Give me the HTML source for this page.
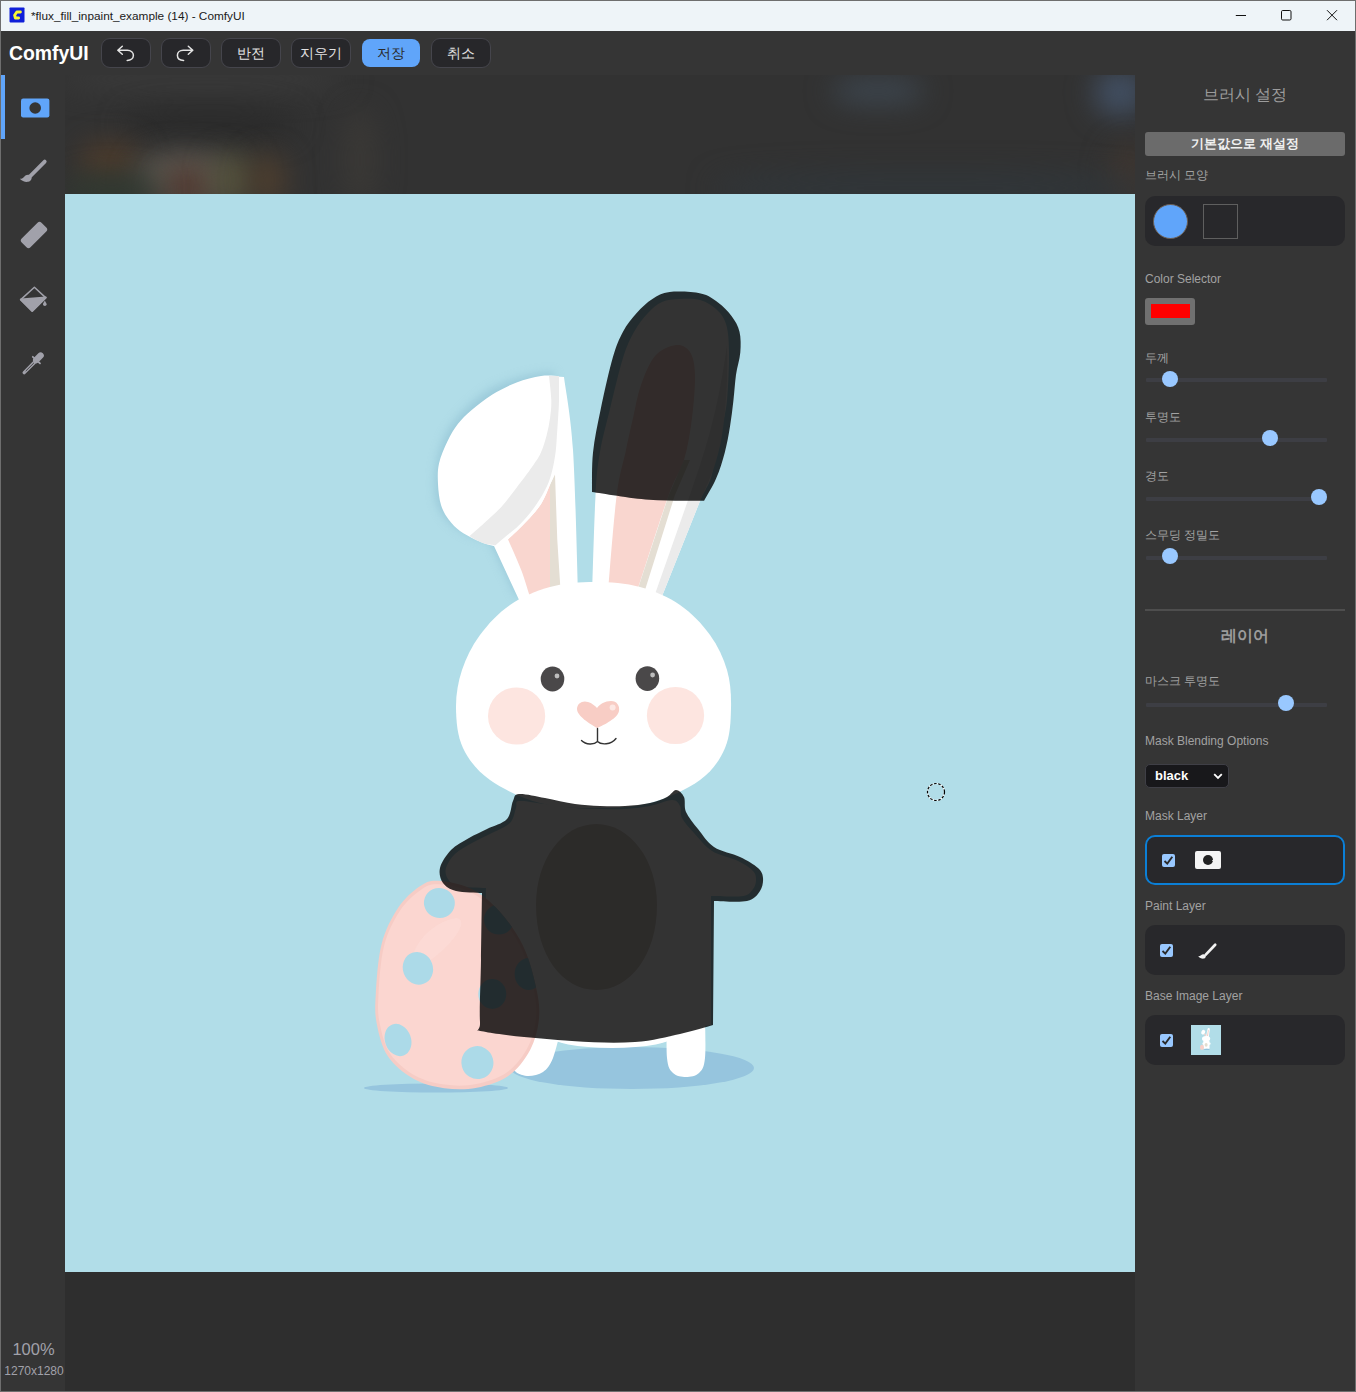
<!DOCTYPE html>
<html><head><meta charset="utf-8">
<style>
*{box-sizing:border-box;margin:0;padding:0}
html,body{width:1356px;height:1392px;overflow:hidden;background:#6e6e6e;font-family:"Liberation Sans",sans-serif}
.abs{position:absolute}
#win{position:absolute;left:1px;top:1px;width:1354px;height:1390px;background:#353535;overflow:hidden}
#title{position:absolute;left:0;top:0;width:1354px;height:30px;background:#eef4f8}
#title .t{position:absolute;left:30px;top:7.5px;font-size:11.8px;color:#1a1a1a;white-space:nowrap}
#header{position:absolute;left:0;top:30px;width:1354px;height:44px;background:#353535}
.btn{position:absolute;top:7px;height:30px;border:1px solid #45454c;background:#27272a;border-radius:9px;color:#e2e2e2;font-size:14px;text-align:center;line-height:28px}
#left{position:absolute;left:0;top:74px;width:64px;height:1316px;background:#353535}
#canvasbg{position:absolute;left:64px;top:74px;width:1070px;height:1316px;background:#2e2e2e;overflow:hidden}
#side{position:absolute;left:1134px;top:74px;width:220px;height:1316px;background:#353535}
.lbl{position:absolute;left:10px;font-size:12px;color:#a2a2a2;white-space:nowrap}
.track{position:absolute;left:11px;width:181px;height:4px;background:#3d3e44;border-radius:1px}
.thumb{position:absolute;width:16px;height:16px;border-radius:50%;background:#99c8ff}
.lay{position:absolute;left:10px;width:200px;height:50px;background:#28282b;border-radius:10px}
.chk{position:absolute;width:13px;height:13px;background:#99c8ff;border-radius:2px}
</style></head><body>
<div id="win">
  <div id="title">
    <svg class="abs" style="left:0;top:0" width="1354" height="30" viewBox="1 1 1354 30">
      <rect x="9.5" y="7.4" width="15" height="15" rx="0.8" fill="#0f1fd8"/>
      <path d="M20.4 12 L16.8 12 L14.6 15.2 L15.4 18 L18.6 18" fill="none" stroke="#f8f832" stroke-width="2.9" stroke-linejoin="round" stroke-linecap="round"/>
      <line x1="1235.8" y1="15.5" x2="1246" y2="15.5" stroke="#111" stroke-width="1"/>
      <rect x="1281.5" y="10.5" width="9.5" height="9.5" rx="1.2" fill="none" stroke="#111" stroke-width="1"/>
      <path d="M1327 10.2 L1337 20.2 M1337 10.2 L1327 20.2" stroke="#111" stroke-width="1"/>
    </svg>
    <div class="t">*flux_fill_inpaint_example (14) - ComfyUI</div>
  </div>
  <div id="header">
    <div class="abs" style="left:8px;top:10.5px;font-size:19.4px;font-weight:bold;color:#fff">ComfyUI</div>
    <div class="btn" style="left:100px;width:50px"></div>
    <div class="btn" style="left:160px;width:50px"></div>
    <svg class="abs" style="left:0;top:0" width="300" height="44" viewBox="1 31 300 44">
      <path d="M122.3 46.2 L117.8 50.2 L122.3 54.2 M118 50.2 L127.4 50.2 C131 50.2 133.4 52.6 133.4 55.3 C133.4 58.2 131 60.4 127.2 60.4" fill="none" stroke="#e4e4e4" stroke-width="1.5" stroke-linecap="round" stroke-linejoin="round"/>
      <path d="M188.3 46.2 L192.8 50.2 L188.3 54.2 M192.6 50.2 L183.2 50.2 C179.6 50.2 177.4 52.6 177.4 55.3 C177.4 58.2 179.6 60.4 183.6 60.4" fill="none" stroke="#e4e4e4" stroke-width="1.5" stroke-linecap="round" stroke-linejoin="round"/>
    </svg>
    <div class="btn" style="left:220px;width:60px">반전</div>
    <div class="btn" style="left:290px;width:60px">지우기</div>
    <div class="btn" style="left:360px;width:60px;background:#60a5fa;border-color:transparent;background-clip:padding-box;color:#2a2a2a">저장</div>
    <div class="btn" style="left:430px;width:60px">취소</div>
  </div>
  <div id="left">
    <div class="abs" style="left:0;top:1264.8px;width:65px;text-align:center;font-size:16.5px;color:#a1a1aa;white-space:nowrap">100%</div>
    <div class="abs" style="left:0;top:1288.8px;width:66px;text-align:center;font-size:12px;color:#a1a1aa;white-space:nowrap">1270x1280</div>
    <div class="abs" style="left:0;top:0;width:4px;height:64px;background:#60a5fa"></div>
    <svg class="abs" style="left:0;top:0" width="64" height="320" viewBox="0 0 64 320">
      <rect x="20" y="23.6" width="28.4" height="18.8" rx="2.2" fill="#60a5fa"/>
      <circle cx="34.2" cy="33" r="5.8" fill="#353535"/>
      <line x1="43.7" y1="86.6" x2="29.5" y2="100.8" stroke="#a1a1aa" stroke-width="3.8" stroke-linecap="round"/>
      <path d="M30 101 C28 98.8 24.6 99.6 23.2 101.8 C22.2 103.2 20.6 104 18.8 103.8 C20.8 106.2 24.6 107.4 27.2 106.8 C30 106.2 31.6 103.2 30 101Z" fill="#a1a1aa"/>
      <rect x="19" y="153.8" width="28" height="12.4" rx="2.8" fill="#a1a1aa" transform="rotate(-45 33 160)"/>
      <path d="M33.4 212.2 L44.6 222.6 L31.2 235.8 L19.8 224.6 Z" fill="none" stroke="#a1a1aa" stroke-width="1.5" stroke-linejoin="round"/>
      <path d="M19.8 224.6 L44.8 222.6 L31.2 236 Z" fill="#a1a1aa" stroke="#a1a1aa" stroke-width="2" stroke-linejoin="round"/>
      <path d="M43.8 225.8 C43.8 225.8 42 228.4 42 229.2 A1.8 1.8 0 0 0 45.6 229.2 C45.6 228.4 43.8 225.8 43.8 225.8Z" fill="#a1a1aa"/>
      <line x1="35.2" y1="285" x2="39.6" y2="280.6" stroke="#a1a1aa" stroke-width="6.4" stroke-linecap="round"/>
      <line x1="31.8" y1="281.8" x2="39" y2="288.4" stroke="#a1a1aa" stroke-width="1.8" stroke-linecap="round"/>
      <path d="M34 286.8 L23.2 297.6" stroke="#a1a1aa" stroke-width="3.4" stroke-linecap="round"/>
      <path d="M32.6 288.2 L25 295.8" stroke="#353535" stroke-width="0.9" stroke-linecap="round"/>
    </svg>
  </div>
  <div id="canvasbg">
    <div class="abs" style="left:0;top:0;width:1070px;height:119px;overflow:hidden;background:#323232">
      <div class="abs" style="left:-10px;top:-8px;width:290px;height:24px;background:#3b3b3b;filter:blur(14px);border-radius:40%"></div>
      <div class="abs" style="left:60px;top:35px;width:170px;height:30px;background:#2a2a2a;filter:blur(14px);border-radius:40%"></div>
      <div class="abs" style="left:15px;top:68px;width:60px;height:36px;background:#4e3c2c;filter:blur(14px);border-radius:40%"></div>
      <div class="abs" style="left:72px;top:78px;width:95px;height:50px;background:#5d5a52;filter:blur(14px);border-radius:40%"></div>
      <div class="abs" style="left:98px;top:92px;width:50px;height:40px;background:#523a32;filter:blur(14px);border-radius:40%"></div>
      <div class="abs" style="left:148px;top:80px;width:40px;height:50px;background:#54523c;filter:blur(14px);border-radius:40%"></div>
      <div class="abs" style="left:185px;top:80px;width:35px;height:50px;background:#4e3e2e;filter:blur(14px);border-radius:40%"></div>
      <div class="abs" style="left:0px;top:100px;width:95px;height:30px;background:#313a31;filter:blur(14px);border-radius:40%"></div>
      <div class="abs" style="left:280px;top:35px;width:30px;height:100px;background:#3b3936;filter:blur(14px);border-radius:40%"></div>
      <div class="abs" style="left:768px;top:4px;width:90px;height:24px;background:#3e4852;filter:blur(14px);border-radius:40%"></div>
      <div class="abs" style="left:1030px;top:-5px;width:50px;height:45px;background:#425064;filter:blur(14px);border-radius:40%"></div>
      <div class="abs" style="left:1045px;top:70px;width:40px;height:60px;background:#3f3630;filter:blur(14px);border-radius:40%"></div>
      <div class="abs" style="left:650px;top:98px;width:430px;height:30px;background:#30363a;filter:blur(14px);border-radius:40%"></div>
    </div>
        <svg class="abs" style="left:0;top:0" width="1070" height="1316" viewBox="65 75 1070 1316">
      <defs>
        <filter id="bl" x="-50%" y="-50%" width="200%" height="200%"><feGaussianBlur stdDeviation="12"/></filter>
        <filter id="bl2" x="-50%" y="-50%" width="200%" height="200%"><feGaussianBlur stdDeviation="5"/></filter>
        <clipPath id="eggclip"><path d="M450 880 C505 880 545 940 542 1010 C540 1060 505 1088 458 1088 C410 1088 375 1055 375 1005 C375 935 405 880 450 880 Z"/></clipPath>
        <clipPath id="topclip"><rect x="65" y="75" width="1070" height="119"/></clipPath>
      </defs>
            <rect x="65" y="194" width="1070" height="1078" fill="#b1dde8"/>
      <!--BUNNY-->
      <path d="M559 376 C540 376 516 382 492 394 C472 408 458 423 450 438 C440 458 437 484 440 505 C446 525 466 540 494 545 L520 600 L540 600 Z" fill="#86b8cc" opacity="0.5" filter="url(#bl2)" transform="translate(-4,-4)"/>
      <path d="M494.0 546.0 L520.0 602.0 L578.0 592.0 C577.2 568.3 575.3 485.8 573.0 450.0 C570.7 414.2 565.5 389.2 564.0 377.0 L549.0 376.0 L494.0 546.0 Z" fill="#ffffff"/>
      <path d="M508.0 539.3 C511.1 536.3 520.9 527.5 526.4 521.6 C531.9 515.7 537.2 510.0 541.1 503.9 C545.0 497.8 548.5 487.9 550.0 484.7 L550.0 590.0 L529.4 595.0 C528.0 590.8 524.8 579.3 521.2 570.0 C517.6 560.7 510.2 544.4 508.0 539.3 Z" fill="#f9d6cf"/>
      <path d="M550 484.7 L555 474.4 L557.3 540 L560.5 590 L550 590 Z" fill="#e4ded3"/>
      <path d="M559.0 376.0 C556.0 376.0 548.1 374.9 541.0 376.0 C533.9 377.1 524.7 379.3 516.6 382.4 C508.5 385.5 499.9 389.9 492.4 394.5 C484.9 399.1 477.4 405.1 471.7 410.0 C466.0 414.9 462.0 418.6 458.0 423.8 C454.0 429.0 450.8 434.4 447.6 441.0 C444.4 447.6 440.6 456.2 439.0 463.4 C437.4 470.6 437.7 477.1 438.0 484.0 C438.3 490.9 439.2 499.0 441.0 505.0 C442.8 511.0 445.8 515.7 449.0 520.0 C452.2 524.3 455.8 527.8 460.0 531.0 C464.2 534.2 469.7 536.8 474.0 539.0 C478.3 541.2 482.7 542.8 486.0 544.0 C489.3 545.2 492.7 545.7 494.0 546.0 C496.3 544.9 502.6 543.4 508.0 539.3 C513.4 535.2 520.9 527.5 526.4 521.6 C531.9 515.7 537.2 510.0 541.1 503.9 C545.0 497.8 547.9 489.7 550.0 484.7 C552.1 479.7 552.8 479.3 554.0 474.0 C555.2 468.7 556.7 462.0 557.5 453.0 C558.3 444.0 558.8 432.8 559.0 420.0 C559.2 407.2 559.0 383.3 559.0 376.0 Z" fill="#ffffff"/>
      <path d="M549.0 376.0 L559.0 376.0 C559.0 380.0 559.1 393.1 559.0 400.0 C558.9 406.9 558.5 411.8 558.1 417.7 C557.8 423.6 557.3 429.5 556.9 435.4 C556.5 441.3 556.4 446.6 555.5 453.0 C554.6 459.4 553.2 467.4 551.4 473.7 C549.6 480.0 547.8 484.8 544.8 490.6 C541.8 496.4 538.0 502.5 533.7 508.3 C529.4 514.1 523.7 520.6 519.0 525.3 C514.3 530.0 509.6 533.1 505.7 536.4 C501.8 539.7 497.1 543.7 495.4 545.2 C493.8 545.0 489.2 544.9 486.0 544.0 C482.8 543.1 478.7 541.3 476.0 540.0 C473.3 538.7 470.7 536.7 469.6 536.0 C472.1 533.9 479.0 528.0 484.3 523.1 C489.6 518.2 496.0 512.7 501.3 506.9 C506.6 501.1 510.9 495.0 516.0 488.4 C521.1 481.8 527.9 472.9 532.0 467.0 C536.1 461.1 538.3 458.3 540.7 453.0 C543.1 447.7 545.0 441.3 546.6 435.4 C548.2 429.5 549.3 423.6 550.1 417.7 C550.9 411.8 551.5 406.9 551.3 400.0 C551.1 393.1 549.4 380.0 549.0 376.0 Z" fill="#ebebeb"/>
      <path d="M592.0 597.0 C592.6 580.2 594.2 520.2 595.5 496.0 C596.8 471.8 597.6 466.5 600.0 452.0 C602.4 437.5 606.2 424.7 610.0 409.0 C613.8 393.3 619.0 370.8 623.0 358.0 C627.0 345.2 629.8 339.5 634.0 332.0 C638.2 324.5 643.3 318.0 648.0 313.0 C652.7 308.0 656.7 304.3 662.0 302.0 C667.3 299.7 673.7 299.3 680.0 299.0 C686.3 298.7 694.0 298.3 700.0 300.0 C706.0 301.7 711.7 305.0 716.0 309.0 C720.3 313.0 723.8 316.8 726.0 324.0 C728.2 331.2 728.8 339.3 729.0 352.0 C729.2 364.7 728.2 387.5 727.0 400.0 C725.8 412.5 723.8 418.3 722.0 427.0 C720.2 435.7 717.8 443.5 716.0 452.0 C714.2 460.5 713.3 470.7 711.0 478.0 C708.7 485.3 703.5 493.0 702.0 496.0 L661.7 597.0 L592.0 597.0 Z" fill="#ffffff"/>
      <path d="M654 597 L689.5 496 L700 465 C715 420 722 380 727 345 C728 380 726 410 722 435 C718 460 710 480 702 496 L661.7 597 Z" fill="#ebebeb"/>
      <path d="M608.0 592.0 C609.4 576.0 613.6 519.7 616.6 496.0 C619.6 472.3 623.3 463.0 626.0 450.0 C628.7 437.0 630.5 428.8 633.0 418.0 C635.5 407.2 637.3 395.3 641.0 385.0 C644.7 374.7 649.2 362.7 655.0 356.0 C660.8 349.3 670.2 345.7 676.0 345.0 C681.8 344.3 686.8 347.0 690.0 352.0 C693.2 357.0 694.7 364.0 695.0 375.0 C695.3 386.0 693.8 403.8 692.0 418.0 C690.2 432.2 687.9 447.0 684.0 460.0 C680.1 473.0 676.3 474.0 668.4 496.0 C660.5 518.0 642.1 576.0 636.8 592.0 L608.0 592.0 Z" fill="#f9d6cf"/>
      <path d="M668.4 496 L684 460 L690 460 L674.6 496 L644.4 592 L636.8 592 Z" fill="#e4ded3"/>
      <ellipse cx="632" cy="1068" rx="122" ry="21" fill="#96c5de"/>
      <ellipse cx="436" cy="1088" rx="72" ry="4.5" fill="#96c5de"/>
      <path d="M540.0 1015.0 L562.0 1025.0 C560.5 1030.5 556.2 1050.2 553.0 1058.0 C549.8 1065.8 547.3 1069.0 543.0 1072.0 C538.7 1075.0 531.8 1076.3 527.0 1076.0 C522.2 1075.7 516.0 1073.0 514.0 1070.0 C512.0 1067.0 513.0 1063.0 515.0 1058.0 C517.0 1053.0 521.8 1047.2 526.0 1040.0 C530.2 1032.8 537.7 1019.2 540.0 1015.0 Z" fill="#ffffff"/>
      <path d="M667.0 1015.0 L705.0 1015.0 C705.0 1022.2 706.0 1048.3 705.0 1058.0 C704.0 1067.7 702.2 1069.8 699.0 1073.0 C695.8 1076.2 690.3 1077.0 686.0 1077.0 C681.7 1077.0 676.2 1076.2 673.0 1073.0 C669.8 1069.8 668.0 1067.7 667.0 1058.0 C666.0 1048.3 667.0 1022.2 667.0 1015.0 Z" fill="#ffffff"/>
      <ellipse cx="612" cy="1036" rx="62" ry="12" fill="#ffffff"/>
      <path d="M711.0 896.0 L711.0 1025.0 C692.5 1027.0 638.0 1036.5 600.0 1037.0 C562.0 1037.5 502.5 1029.5 483.0 1028.0 L486.0 888.0 C481.3 887.7 464.3 887.5 458.0 886.0 C451.7 884.5 450.0 882.0 448.0 879.0 C446.0 876.0 444.8 872.2 446.0 868.0 C447.2 863.8 450.7 858.2 455.0 854.0 C459.3 849.8 466.2 846.3 472.0 843.0 C477.8 839.7 483.7 837.3 490.0 834.0 C496.3 830.7 505.7 827.3 510.0 823.0 C514.3 818.7 514.5 811.7 516.0 808.0 C517.5 804.3 514.2 801.7 519.0 801.0 C523.8 800.3 535.7 802.8 545.0 804.0 C554.3 805.2 565.8 807.2 575.0 808.0 C584.2 808.8 591.7 808.8 600.0 809.0 C608.3 809.2 616.7 809.5 625.0 809.0 C633.3 808.5 642.2 807.5 650.0 806.0 C657.8 804.5 667.0 800.0 672.0 800.0 C677.0 800.0 678.3 803.0 680.0 806.0 C681.7 809.0 679.7 813.5 682.0 818.0 C684.3 822.5 689.0 827.5 694.0 833.0 C699.0 838.5 704.7 846.3 712.0 851.0 C719.3 855.7 731.2 857.7 738.0 861.0 C744.8 864.3 750.0 867.8 753.0 871.0 C756.0 874.2 756.0 877.0 756.0 880.0 C756.0 883.0 755.2 886.3 753.0 889.0 C750.8 891.7 750.0 894.8 743.0 896.0 C736.0 897.2 716.3 896.0 711.0 896.0 Z" fill="#ffffff"/>
      <path d="M596.4 824 C630 824 657 860 657 905 C657 955 630 990 596.4 990 C562 990 536 955 536 905 C536 860 562 824 596.4 824 Z" fill="#dcd4cc"/>
      <path d="M595.0 582.0 C610.0 582.0 625.8 583.2 640.0 587.0 C654.2 590.8 668.3 597.0 680.0 605.0 C691.7 613.0 702.2 624.2 710.0 635.0 C717.8 645.8 723.5 657.8 727.0 670.0 C730.5 682.2 731.3 695.0 731.0 708.0 C730.7 721.0 730.2 736.0 725.0 748.0 C719.8 760.0 712.5 770.8 700.0 780.0 C687.5 789.2 667.5 798.3 650.0 803.0 C632.5 807.7 613.3 808.0 595.0 808.0 C576.7 808.0 557.5 807.7 540.0 803.0 C522.5 798.3 502.8 789.2 490.0 780.0 C477.2 770.8 468.7 760.0 463.0 748.0 C457.3 736.0 456.2 721.0 456.0 708.0 C455.8 695.0 458.0 682.2 462.0 670.0 C466.0 657.8 472.0 645.8 480.0 635.0 C488.0 624.2 498.3 613.0 510.0 605.0 C521.7 597.0 535.8 590.8 550.0 587.0 C564.2 583.2 580.0 582.0 595.0 582.0 Z" fill="#ffffff"/>
      <circle cx="516.6" cy="716" r="28.6" fill="#fde5e0"/>
      <circle cx="675.5" cy="715.5" r="28.6" fill="#fde5e0"/>
      <ellipse cx="552.5" cy="679" rx="11.8" ry="12.4" fill="#4a4849"/>
      <ellipse cx="647.4" cy="678.6" rx="11.8" ry="12.4" fill="#4a4849"/>
      <circle cx="557" cy="676" r="2.4" fill="#bdbdbd"/>
      <circle cx="652.6" cy="675" r="2.4" fill="#bdbdbd"/>
      <path d="M597 728 C590 724 577 716 577 709 C577 703 583 700 588 702 C592 703 595 706 597 708 C600 704 605 701 611 701 C617 701 620 706 619 711 C618 718 604 725 597 728 Z" fill="#f8cdc5"/>
      <circle cx="612.6" cy="707.5" r="3" fill="#fde8e4"/>
      <path d="M581.5 740.5 C586 745 594 745 597.5 741.5 C601 745 611 745 616 738.5 M597.5 741.5 L597.5 728.5" fill="none" stroke="#333" stroke-width="1.4" stroke-linecap="round"/>
      <clipPath id="eggclip2"><path d="M437.7 880.7 C446.2 881.0 460.3 883.5 470.5 888.5 C480.7 893.5 490.3 901.2 499.0 910.7 C507.7 920.2 516.7 932.9 522.9 945.6 C529.1 958.3 533.3 974.7 536.0 986.9 C538.7 999.1 540.0 1008.0 539.0 1018.6 C538.0 1029.2 535.1 1040.8 530.0 1050.3 C524.9 1059.8 517.5 1069.5 508.6 1075.7 C499.8 1081.9 487.6 1085.6 476.9 1087.7 C466.2 1089.8 454.9 1089.7 444.3 1088.2 C433.7 1086.7 422.8 1084.1 413.4 1078.8 C404.0 1073.5 394.1 1065.6 388.0 1056.6 C381.9 1047.6 379.1 1035.2 377.0 1025.0 C374.9 1014.8 374.9 1009.0 375.7 995.6 C376.4 982.2 377.8 959.0 381.5 944.4 C385.2 929.8 391.7 917.6 398.0 908.0 C404.3 898.4 412.9 891.0 419.5 886.5 C426.1 882.0 429.2 880.4 437.7 880.7 Z"/></clipPath>
      <path d="M437.7 880.7 C446.2 881.0 460.3 883.5 470.5 888.5 C480.7 893.5 490.3 901.2 499.0 910.7 C507.7 920.2 516.7 932.9 522.9 945.6 C529.1 958.3 533.3 974.7 536.0 986.9 C538.7 999.1 540.0 1008.0 539.0 1018.6 C538.0 1029.2 535.1 1040.8 530.0 1050.3 C524.9 1059.8 517.5 1069.5 508.6 1075.7 C499.8 1081.9 487.6 1085.6 476.9 1087.7 C466.2 1089.8 454.9 1089.7 444.3 1088.2 C433.7 1086.7 422.8 1084.1 413.4 1078.8 C404.0 1073.5 394.1 1065.6 388.0 1056.6 C381.9 1047.6 379.1 1035.2 377.0 1025.0 C374.9 1014.8 374.9 1009.0 375.7 995.6 C376.4 982.2 377.8 959.0 381.5 944.4 C385.2 929.8 391.7 917.6 398.0 908.0 C404.3 898.4 412.9 891.0 419.5 886.5 C426.1 882.0 429.2 880.4 437.7 880.7 Z" fill="#f6ccc5"/>
      <g clip-path="url(#eggclip2)">
      <path d="M437.7 880.7 C446.2 881.0 460.3 883.5 470.5 888.5 C480.7 893.5 490.3 901.2 499.0 910.7 C507.7 920.2 516.7 932.9 522.9 945.6 C529.1 958.3 533.3 974.7 536.0 986.9 C538.7 999.1 540.0 1008.0 539.0 1018.6 C538.0 1029.2 535.1 1040.8 530.0 1050.3 C524.9 1059.8 517.5 1069.5 508.6 1075.7 C499.8 1081.9 487.6 1085.6 476.9 1087.7 C466.2 1089.8 454.9 1089.7 444.3 1088.2 C433.7 1086.7 422.8 1084.1 413.4 1078.8 C404.0 1073.5 394.1 1065.6 388.0 1056.6 C381.9 1047.6 379.1 1035.2 377.0 1025.0 C374.9 1014.8 374.9 1009.0 375.7 995.6 C376.4 982.2 377.8 959.0 381.5 944.4 C385.2 929.8 391.7 917.6 398.0 908.0 C404.3 898.4 412.9 891.0 419.5 886.5 C426.1 882.0 429.2 880.4 437.7 880.7 Z" fill="#fbd6d0" transform="translate(455 985) scale(0.965) translate(-455 -985)"/>
      <path d="M412 958 C418 935 440 920 457 918 C466 920 460 932 447 946 C433 960 408 978 412 958 Z" fill="#fde1dc" opacity="0.45"/>
      <ellipse cx="439.4" cy="903" rx="15.5" ry="15" fill="#acdae8" transform="rotate(20 439.4 903)"/>
      <ellipse cx="417.9" cy="968.3" rx="15" ry="16.5" fill="#acdae8" transform="rotate(-20 417.9 968.3)"/>
      <ellipse cx="398" cy="1040" rx="13" ry="16.5" fill="#acdae8" transform="rotate(-20 398 1040)"/>
      <ellipse cx="477.4" cy="1062.6" rx="16" ry="16.5" fill="#acdae8" transform="rotate(-15 477.4 1062.6)"/>
      <ellipse cx="498.9" cy="919.6" rx="15" ry="15" fill="#acdae8" transform="rotate(0 498.9 919.6)"/>
      <ellipse cx="528.6" cy="974" rx="14" ry="16" fill="#acdae8" transform="rotate(0 528.6 974)"/>
      <ellipse cx="492.3" cy="994" rx="14" ry="15" fill="#acdae8" transform="rotate(0 492.3 994)"/>
      </g>
      <g fill="#000" opacity="0.8"><path d="M704.1 500.7 C694.9 500.6 667.7 501.2 649.0 499.8 C630.3 498.4 601.5 493.3 592.0 492.0 C592.2 485.4 591.5 466.2 593.0 452.4 C594.5 438.6 597.4 425.1 600.7 409.3 C604.0 393.5 609.1 370.5 612.8 357.6 C616.5 344.7 619.0 339.2 623.0 331.7 C627.0 324.2 632.0 318.2 636.9 312.8 C641.8 307.4 646.9 302.5 652.4 299.0 C657.9 295.5 661.7 292.9 669.7 292.0 C677.8 291.1 692.7 291.7 700.7 293.4 C708.8 295.1 712.8 298.6 718.0 302.4 C723.2 306.2 728.1 311.3 731.7 316.2 C735.3 321.1 738.1 325.7 739.5 331.7 C740.9 337.7 740.9 345.2 740.3 352.4 C739.7 359.6 737.1 366.8 736.0 374.8 C734.9 382.9 734.4 392.1 733.4 400.7 C732.4 409.3 731.4 418.0 730.0 426.6 C728.6 435.2 727.1 443.8 724.8 452.4 C722.5 461.0 719.7 470.2 716.2 478.3 C712.8 486.4 706.1 497.0 704.1 500.7 Z"/><path d="M714.0 901.0 L713.0 1025.0 C707.5 1026.5 693.0 1031.2 680.0 1034.0 C667.0 1036.8 653.0 1040.8 635.0 1042.0 C617.0 1043.2 596.8 1042.7 572.0 1041.0 C547.2 1039.3 501.3 1035.2 486.0 1032.0 C470.7 1028.8 480.8 1034.0 480.0 1022.0 C479.2 1010.0 480.7 981.5 481.0 960.0 C481.3 938.5 481.8 904.2 482.0 893.0 C477.7 892.7 462.5 892.7 456.0 891.0 C449.5 889.3 445.7 886.8 443.0 883.0 C440.3 879.2 438.7 873.5 440.0 868.0 C441.3 862.5 446.2 855.0 451.0 850.0 C455.8 845.0 463.0 841.5 469.0 838.0 C475.0 834.5 480.7 832.2 487.0 829.0 C493.3 825.8 502.7 823.7 507.0 819.0 C511.3 814.3 511.0 805.2 513.0 801.0 C515.0 796.8 513.7 794.5 519.0 794.0 C524.3 793.5 535.7 796.3 545.0 798.0 C554.3 799.7 565.8 802.7 575.0 804.0 C584.2 805.3 591.7 805.7 600.0 806.0 C608.3 806.3 616.7 806.5 625.0 806.0 C633.3 805.5 643.0 804.5 650.0 803.0 C657.0 801.5 662.7 799.2 667.0 797.0 C671.3 794.8 673.2 790.0 676.0 790.0 C678.8 790.0 682.3 793.3 684.0 797.0 C685.7 800.7 683.7 806.7 686.0 812.0 C688.3 817.3 693.3 823.2 698.0 829.0 C702.7 834.8 707.0 842.3 714.0 847.0 C721.0 851.7 732.7 853.5 740.0 857.0 C747.3 860.5 754.2 864.5 758.0 868.0 C761.8 871.5 762.7 874.2 763.0 878.0 C763.3 881.8 762.7 887.2 760.0 891.0 C757.3 894.8 754.7 899.3 747.0 901.0 C739.3 902.7 719.5 901.0 714.0 901.0 Z"/></g>
      <!--/BUNNY-->
      <!-- brush cursor -->
      <circle cx="936" cy="792" r="8.5" fill="none" stroke="#fff" stroke-width="1.2"/>
      <circle cx="936" cy="792" r="8.5" fill="none" stroke="#000" stroke-width="1.2" stroke-dasharray="2.6 1.6"/>
    </svg>
  </div>
  <div id="side">
    <div class="abs" style="left:0;top:10px;width:220px;text-align:center;font-size:16px;color:#9c9c9c">브러시 설정</div>
    <div class="abs" style="left:10px;top:57px;width:200px;height:24px;background:#6b6b6b;border-radius:3px;color:#f0f0f0;font-size:13px;font-weight:bold;text-align:center;line-height:24px">기본값으로 재설정</div>
    <div class="lbl" style="top:92px">브러시 모양</div>
    <div class="lay" style="top:121px"></div>
    <div class="abs" style="left:18px;top:129px;width:35px;height:35px;border-radius:50%;background:#60a5fa;border:1px solid #6b5d50"></div>
    <div class="abs" style="left:68px;top:129px;width:35px;height:35px;border:1px solid #5f5f5f"></div>
    <div class="lbl" style="top:197px">Color Selector</div>
    <div class="abs" style="left:10px;top:223px;width:50px;height:27px;background:#707070;border-radius:3px"></div>
    <div class="abs" style="left:16px;top:229px;width:39px;height:14px;background:#ff0000"></div>
    <div class="lbl" style="top:275px">두께</div>
    <div class="track" style="top:303px"></div><div class="thumb" style="left:27px;top:296px"></div>
    <div class="lbl" style="top:334px">투명도</div>
    <div class="track" style="top:363px"></div><div class="thumb" style="left:127px;top:355px"></div>
    <div class="lbl" style="top:393px">경도</div>
    <div class="track" style="top:422px"></div><div class="thumb" style="left:176px;top:414px"></div>
    <div class="lbl" style="top:452px">스무딩 정밀도</div>
    <div class="track" style="top:481px"></div><div class="thumb" style="left:27px;top:473px"></div>
    <div class="abs" style="left:10px;top:534px;width:200px;height:2px;background:#4e4e4e"></div>
    <div class="abs" style="left:0;top:551px;width:220px;text-align:center;font-size:16px;font-weight:bold;color:#9c9c9c">레이어</div>
    <div class="lbl" style="top:598px">마스크 투명도</div>
    <div class="track" style="top:628px"></div><div class="thumb" style="left:143px;top:620px"></div>
    <div class="lbl" style="top:659px">Mask Blending Options</div>
    <div class="abs" style="left:10px;top:689px;width:84px;height:24px;background:#18181b;border:1px solid #3f3f46;border-radius:5px;color:#fff;font-size:13px;font-weight:bold;line-height:22px;padding-left:9px">black
      <svg class="abs" style="left:67px;top:8px" width="10" height="7" viewBox="0 0 10 7"><path d="M1.2 1.2 L5 5 L8.8 1.2" fill="none" stroke="#fff" stroke-width="1.8"/></svg></div>
    <div class="lbl" style="top:734px">Mask Layer</div>
    <div class="lay" style="top:760px;border:2px solid #0b7fd6"></div>
    <div class="chk" style="left:27px;top:779px"><svg class="abs" style="left:0;top:0" width="13" height="13" viewBox="0 0 13 13"><path d="M2.5 7 L5.3 9.6 L10.3 2.8" fill="none" stroke="#2a2a2a" stroke-width="1.9"/></svg></div>
    <div class="abs" style="left:60px;top:776px;width:26px;height:18px;background:#f4f4f4;border-radius:2px"></div>
    <div class="abs" style="left:67.5px;top:779.5px;width:10.6px;height:10.6px;border-radius:50%;background:#222"></div>
    <div class="abs" style="left:76.8px;top:784.6px;width:1.5px;height:1.8px;border-radius:50%;background:#e8e8e8"></div>
    <div class="lbl" style="top:824px">Paint Layer</div>
    <div class="lay" style="top:850px"></div>
    <div class="chk" style="left:25px;top:869px"><svg class="abs" style="left:0;top:0" width="13" height="13" viewBox="0 0 13 13"><path d="M2.5 7 L5.3 9.6 L10.3 2.8" fill="none" stroke="#2a2a2a" stroke-width="1.9"/></svg></div>
    <div class="lbl" style="top:914px">Base Image Layer</div>
    <div class="lay" style="top:940px"></div>
    <div class="chk" style="left:25px;top:959px"><svg class="abs" style="left:0;top:0" width="13" height="13" viewBox="0 0 13 13"><path d="M2.5 7 L5.3 9.6 L10.3 2.8" fill="none" stroke="#2a2a2a" stroke-width="1.9"/></svg></div>
    <svg class="abs" style="left:0;top:850px" width="220" height="50" viewBox="1135 925 220 50">
      <line x1="1215.2" y1="944.8" x2="1205.8" y2="954.6" stroke="#f2f2f2" stroke-width="2.7" stroke-linecap="round"/>
      <path d="M1205.4 955 C1204 953.6 1202 954.2 1201 955.2 C1200.2 956 1199.2 956.4 1198.2 956.3 C1199.4 957.8 1201.6 958.8 1203.6 958.6 C1205.4 958.4 1206.6 956.6 1205.4 955 Z" fill="#f2f2f2"/>
    </svg>
    <svg class="abs" style="left:56px;top:950px" width="30" height="30" viewBox="1191 1025 30 30">
      <rect x="1191" y="1025" width="30" height="30" fill="#b1dde8"/>
      <ellipse cx="1203.2" cy="1032.2" rx="1.9" ry="2.4" fill="#fff" transform="rotate(25 1203.2 1032.2)"/>
      <path d="M1204 1034 L1205.4 1037 L1206.4 1036.6 L1205.4 1033.6 Z" fill="#f6d6cf"/>
      <path d="M1206 1037 L1207.4 1029.4 C1207.8 1027.6 1210 1027.6 1209.8 1029.6 L1208.8 1037 Z" fill="#fff"/>
      <path d="M1206.9 1036 L1208 1030 L1208.9 1030.2 L1208.1 1036 Z" fill="#f6d0c8"/>
      <ellipse cx="1206.1" cy="1038.8" rx="4.1" ry="2.7" fill="#fff"/>
      <rect x="1203.3" y="1041" width="6.2" height="7.8" rx="0.6" fill="#fff"/>
      <rect x="1202.4" y="1042.6" width="8.2" height="2.2" rx="1" fill="#fff"/>
      <ellipse cx="1206.1" cy="1044.8" rx="1.5" ry="1.9" fill="#e2ddd0"/>
      <ellipse cx="1206.8" cy="1049.4" rx="2.9" ry="0.7" fill="#93c3de"/>
      <ellipse cx="1202" cy="1047.3" rx="2" ry="2.6" fill="#f8d0c8"/>
    </svg>
  </div>
</div>
</body></html>
